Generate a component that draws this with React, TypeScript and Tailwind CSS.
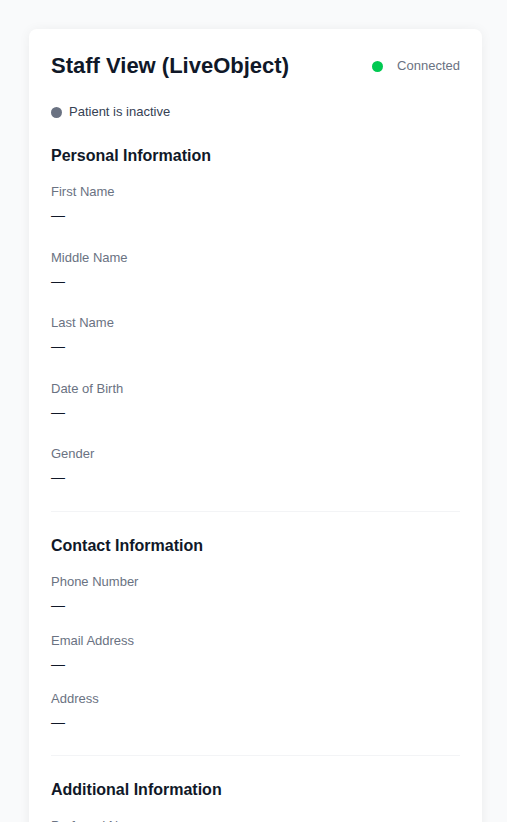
import React from 'react';

type Field = { label: string; value?: string };

const personal: Field[] = [
    { label: 'First Name' },
    { label: 'Middle Name' },
    { label: 'Last Name' },
    { label: 'Date of Birth' },
    { label: 'Gender' },
];

const contact: Field[] = [
    { label: 'Phone Number' },
    { label: 'Email Address' },
    { label: 'Address' },
];

const additional: Field[] = [
    { label: 'Preferred Name' },
    { label: 'Notes' },
];

const FieldRow: React.FC<{ field: Field }> = ({ field }) => (
    <div>
        <div className="text-[13px] leading-[20px] text-gray-500">{field.label}</div>
        <div className="mt-[3px] text-[14px] leading-[20px] text-gray-900">{field.value || '—'}</div>
    </div>
);

const App: React.FC = () => {
    return (
        <div className="min-h-screen bg-gray-50 pt-[29px] pl-[29px] pr-[25px] pb-8 font-['Liberation_Sans',Arial,sans-serif]">
            <div className="bg-white rounded-lg shadow-[0_1px_12px_rgba(0,0,0,0.06)] px-[22px] pt-[23px] pb-8">
                <div className="flex items-center justify-between h-[28px]">
                    <h1 className="text-[22px] leading-[28px] font-bold text-gray-900">Staff View (LiveObject)</h1>
                    <div className="flex items-center">
                        <span className="w-[11px] h-[11px] rounded-full bg-green-500 mr-[14px]"></span>
                        <span className="text-[13px] leading-[20px] text-gray-500">Connected</span>
                    </div>
                </div>

                <div className="mt-[22px] flex items-center gap-[7px] h-[20px]">
                    <span className="w-[11px] h-[11px] rounded-full bg-gray-500"></span>
                    <span className="text-[13px] leading-[20px] text-gray-700">Patient is inactive</span>
                </div>

                <section className="mt-[22px]">
                    <h2 className="text-[16px] leading-[24px] font-bold text-gray-900">Personal Information</h2>
                    <div className="mt-[14px] flex flex-col gap-[22.5px]">
                        {personal.map(f => <FieldRow key={f.label} field={f} />)}
                    </div>
                </section>

                <div className="mt-[24px] border-t border-gray-100"></div>

                <section className="mt-[22px]">
                    <h2 className="text-[16px] leading-[24px] font-bold text-gray-900">Contact Information</h2>
                    <div className="mt-[14px] flex flex-col gap-[15.5px]">
                        {contact.map(f => <FieldRow key={f.label} field={f} />)}
                    </div>
                </section>

                <div className="mt-[23px] border-t border-gray-100"></div>

                <section className="mt-[22px]">
                    <h2 className="text-[16px] leading-[24px] font-bold text-gray-900">Additional Information</h2>
                    <div className="mt-[14px] flex flex-col gap-[15.5px]">
                        {additional.map(f => <FieldRow key={f.label} field={f} />)}
                    </div>
                </section>
            </div>
        </div>
    );
};

export default App;
